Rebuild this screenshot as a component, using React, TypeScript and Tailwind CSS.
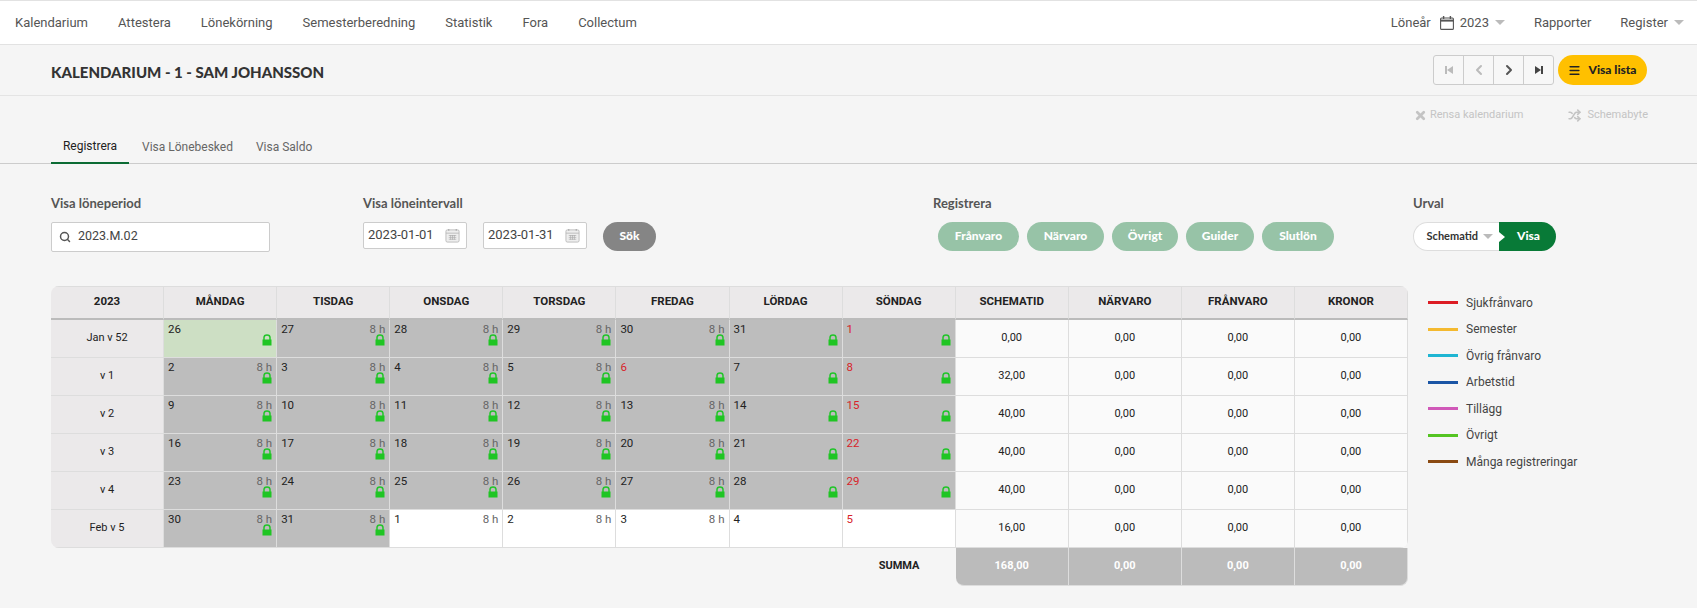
import { ChevronLeft, ChevronRight, Menu, Search, Shuffle, X } from "lucide-react"

const navLinks = ["Kalendarium", "Attestera", "Lönekörning", "Semesterberedning", "Statistik", "Fora", "Collectum"]
const pills = [
  { label: "Frånvaro", width: "w-[81px]" },
  { label: "Närvaro", width: "w-[77px]" },
  { label: "Övrigt", width: "w-[66px]" },
  { label: "Guider", width: "w-[68px]" },
  { label: "Slutlön", width: "w-[72px]" },
]
const headers = ["2023", "Måndag", "Tisdag", "Onsdag", "Torsdag", "Fredag", "Lördag", "Söndag", "Schematid", "Närvaro", "Frånvaro", "Kronor"]

const legend = [
  { label: "Sjukfrånvaro", color: "bg-[#dc1c24]" },
  { label: "Semester", color: "bg-[#f4b92f]" },
  { label: "Övrig frånvaro", color: "bg-[#1fb5d2]" },
  { label: "Arbetstid", color: "bg-[#1a55a5]" },
  { label: "Tillägg", color: "bg-[#d058b8]" },
  { label: "Övrigt", color: "bg-[#54c422]" },
  { label: "Många registreringar", color: "bg-[#8a4a12]" },
]

type Day = { n: number; hours?: boolean; locked?: boolean; green?: boolean }

const d = (n: number, hours = true, locked = true, green = false): Day => ({ n, hours, locked, green })

const rows: { week: string; days: Day[]; sched: string }[] = [
  { week: "Jan v 52", sched: "0,00", days: [d(26, false, true, true), d(27), d(28), d(29), d(30), d(31, false), d(1, false)] },
  { week: "v 1", sched: "32,00", days: [d(2), d(3), d(4), d(5), d(6, false), d(7, false), d(8, false)] },
  { week: "v 2", sched: "40,00", days: [d(9), d(10), d(11), d(12), d(13), d(14, false), d(15, false)] },
  { week: "v 3", sched: "40,00", days: [d(16), d(17), d(18), d(19), d(20), d(21, false), d(22, false)] },
  { week: "v 4", sched: "40,00", days: [d(23), d(24), d(25), d(26), d(27), d(28, false), d(29, false)] },
  { week: "Feb v 5", sched: "16,00", days: [d(30), d(31), d(1, true, false), d(2, true, false), d(3, true, false), d(4, false, false), d(5, false, false)] },
]

function Lock() {
  return (
    <svg viewBox="0 0 10 12" className="absolute right-[4px] top-[14px] w-[10px] h-[12px]">
      <path d="M2 6V3.6C2 1.9 3.3 1 5 1s3 .9 3 2.6V6" fill="none" stroke="#22c52a" strokeWidth="1.5" />
      <rect x="0.5" y="5.5" width="9" height="6" fill="#1fc523" />
    </svg>
  )
}

function DateIcon() {
  return (
    <svg viewBox="0 0 16 16" className="w-[15px] h-[15px]">
      <rect x="1" y="2" width="14" height="13" rx="1.5" fill="#eee" stroke="#bbb" />
      <path d="M4 1v2M12 1v2" stroke="#aaa" strokeWidth="1.2" />
      <path d="M1 5.5h14" stroke="#bbb" />
      <path d="M4 8h8M4 10h8M4 12h8M6 7.5v5M8 7.5v5M10 7.5v5" stroke="#aaa" strokeWidth="0.7" />
    </svg>
  )
}

function YearIcon() {
  return (
    <svg viewBox="0 0 14 14" className="w-[14px] h-[14px] ml-[9px] mr-[6px]" fill="none" stroke="#555" strokeWidth="1.1">
      <rect x="0.6" y="2" width="12.8" height="11.4" rx="1" />
      <path d="M0.6 4.6h12.8" strokeWidth="2" />
      <path d="M3.6 0v3M10.4 0v3" strokeWidth="1.4" />
    </svg>
  )
}

function Caret() {
  return <span className="w-0 h-0 border-x-[5px] border-x-transparent border-t-[5px] border-t-[#bbb]" />
}

function StepIcon({ flip, color }: { flip?: boolean; color: string }) {
  return (
    <svg viewBox="0 0 10 10" className={`w-[8px] h-[10px] ${flip ? "-scale-x-100" : ""}`} fill={color}>
      <rect x="0" y="0" width="2.5" height="10" />
      <path d="M10 0v10L2.5 5z" />
    </svg>
  )
}

function Cell({ day, sunday }: { day: Day; sunday: boolean }) {
  const bg = day.green ? "bg-[#cddfc4]" : day.locked ? "bg-[#bdbdbd]" : "bg-white"
  return (
    <div className={`relative h-[38px] ${bg} border-r border-b border-[#ddd] text-[11.5px] leading-none`}>
      <span className={`absolute left-[4px] top-[4px] ${sunday || (day.n === 6 && day.locked) ? "text-[#d8232a]" : "text-[#222]"}`}>{day.n}</span>
      {day.hours && <span className="absolute right-[4px] top-[4px] text-[#666]">8 h</span>}
      {day.locked && <Lock />}
    </div>
  )
}

function ValueCell({ value }: { value: string }) {
  return (
    <div className="h-[38px] bg-[#fafafa] border-r border-b border-[#ddd] flex items-center justify-center text-[11px] text-[#222]">
      {value}
    </div>
  )
}

export default function App() {
  return (
    <div className="min-h-screen bg-[#f5f5f5] font-['Roboto',sans-serif] text-[#333] overflow-hidden">
      <nav className="h-[45px] bg-white border-t border-b border-[#e2e2e2] flex items-center justify-between text-[13px] text-[#555]">
        <div className="flex">
          {navLinks.map((link) => (
            <a key={link} className="px-[15px]">{link}</a>
          ))}
        </div>
        <div className="flex items-center pr-[13px]">
          <span>Löneår</span>
          <YearIcon />
          <span>2023</span>
          <span className="ml-[6px] flex"><Caret /></span>
          <span className="ml-[29px]">Rapporter</span>
          <span className="ml-[29px]">Register</span>
          <span className="ml-[6px] flex"><Caret /></span>
        </div>
      </nav>

      <header className="h-[51px] border-b border-[#e4e4e4] flex items-center justify-between pl-[51px] pr-[50px]">
        <h1 className="pt-[4px] font-['Lato',sans-serif] font-black text-[15px] text-[#333]">KALENDARIUM - 1 - SAM JOHANSSON</h1>
        <div className="flex items-center gap-[4px]">
          <div className="flex h-[30px] bg-[#f7f7f7] border border-[#ccc] rounded-[3px] divide-x divide-[#ccc]">
            <span className="w-[30px] flex items-center justify-center"><StepIcon color="#bbb" /></span>
            <span className="w-[30px] flex items-center justify-center"><ChevronLeft size={16} strokeWidth={3} className="text-[#bbb]" /></span>
            <span className="w-[30px] flex items-center justify-center"><ChevronRight size={16} strokeWidth={3} className="text-[#555]" /></span>
            <span className="w-[29px] flex items-center justify-center"><StepIcon flip color="#444" /></span>
          </div>
          <button className="w-[89px] h-[30px] rounded-full bg-[#ffc000] flex items-center justify-center gap-[7px] font-['Lato',sans-serif] font-black text-[12px] text-[#222]">
            <Menu size={13} strokeWidth={3} />
            Visa lista
          </button>
        </div>
      </header>

      <div className="flex justify-end items-center gap-[45px] pt-[11px] pr-[49px] text-[11px] text-[#c4c4c4]">
        <span className="flex items-center gap-[3px]"><X size={13} strokeWidth={5} /> Rensa kalendarium</span>
        <span className="flex items-center gap-[6px]"><Shuffle size={13} strokeWidth={3} /> Schemabyte</span>
      </div>

      <div className="mt-[7px] h-[33px] border-b border-[#ccc] flex pl-[51px] text-[12px] text-[#666]">
        <span className="w-[78px] h-[33px] border-b-2 border-[#0b6b33] text-[#222] flex items-center justify-center">Registrera</span>
        <span className="ml-[13px] flex items-center">Visa Lönebesked</span>
        <span className="ml-[23px] flex items-center">Visa Saldo</span>
      </div>

      <section className="flex pl-[51px] pt-[30px]">
        <div className="w-[312px]">
          <label className="block font-['Lato',sans-serif] font-bold text-[13px] text-[#555] leading-[18px]">Visa löneperiod</label>
          <div className="mt-[10px] w-[219px] h-[30px] bg-white border border-[#ccc] rounded-[2px] flex items-center px-[7px] gap-[7px] text-[12.5px] text-[#444]">
            <Search size={12} strokeWidth={3} className="text-[#555]" />
            2023.M.02
          </div>
        </div>
        <div className="w-[570px]">
          <label className="block font-['Lato',sans-serif] font-bold text-[13px] text-[#555] leading-[18px]">Visa löneintervall</label>
          <div className="mt-[10px] flex items-start">
            {["2023-01-01", "2023-01-31"].map((date) => (
              <div key={date} className="w-[104px] h-[27px] mr-[16px] bg-white border border-[#ccc] rounded-[2px] flex items-center justify-between pl-[4px] pr-[6px] text-[13px] text-[#444]">
                {date}
                <DateIcon />
              </div>
            ))}
            <button className="w-[53px] h-[29px] rounded-full bg-[#858585] text-white font-['Lato',sans-serif] font-black text-[12px]">Sök</button>
          </div>
        </div>
        <div className="w-[480px]">
          <label className="block font-['Lato',sans-serif] font-bold text-[13px] text-[#555] leading-[18px]">Registrera</label>
          <div className="mt-[10px] ml-[5px] flex gap-[8px]">
            {pills.map((pill) => (
              <button key={pill.label} className={`${pill.width} h-[29px] rounded-full bg-[#97c3a7] text-white font-['Lato',sans-serif] font-black text-[12px]`}>{pill.label}</button>
            ))}
          </div>
        </div>
        <div>
          <label className="block font-['Lato',sans-serif] font-bold text-[13px] text-[#555] leading-[18px]">Urval</label>
          <div className="mt-[10px] flex h-[29px] w-[143px] font-['Lato',sans-serif] font-bold text-[11px]">
            <div className="w-[86px] bg-white border border-[#ddd] border-r-0 rounded-l-full flex items-center justify-end gap-[5px] pr-[6px] text-[#333]">
              Schematid <Caret />
            </div>
            <div className="relative flex-1 bg-[#087a37] rounded-r-full flex items-center pl-[18px] text-white font-black text-[12px]">
              <span className="absolute left-0 top-[10px] w-0 h-0 border-y-[5px] border-y-transparent border-l-[6px] border-l-white" />
              Visa
            </div>
          </div>
        </div>
      </section>

      <div className="flex pl-[51px] pt-[34px]">
        <div className="w-[1357px]">
          <div className="rounded-lg overflow-hidden">
            <div className="grid grid-cols-12">
              {headers.map((h) => (
                <div
                  key={h}
                  className="h-[34px] bg-[#ebe9ea] border-t border-r border-[#ddd] border-b-2 border-b-[#bbb] flex items-center justify-center font-bold text-[11.5px] uppercase text-[#222]"
                >
                  {h}
                </div>
              ))}
              {rows.map((row) => (
                <div key={row.week} className="contents">
                  <div className="h-[38px] bg-[#ebe9ea] border-r border-b border-[#ddd] flex items-center justify-center text-[11px] text-[#222]">{row.week}</div>
                  {row.days.map((day, i) => (
                    <Cell key={i} day={day} sunday={i === 6} />
                  ))}
                  <ValueCell value={row.sched} />
                  <ValueCell value="0,00" />
                  <ValueCell value="0,00" />
                  <ValueCell value="0,00" />
                </div>
              ))}
            </div>
          </div>
          <div className="grid grid-cols-12">
            <div className="col-start-8 h-[38px] flex items-center justify-center font-bold text-[11px] text-[#222]">SUMMA</div>
            {["168,00", "0,00", "0,00", "0,00"].map((v, i) => (
              <div
                key={i}
                className={`h-[38px] bg-[#bbb] border-r border-b border-[#ddd] flex items-center justify-center font-bold text-[11px] text-white ${i === 0 ? "rounded-bl-lg" : ""} ${i === 3 ? "rounded-br-lg" : ""}`}
              >
                {v}
              </div>
            ))}
          </div>
        </div>
        <ul className="ml-[20px] pt-[4px]">
          {legend.map((item) => (
            <li key={item.label} className="h-[26.5px] flex items-center gap-[8px] text-[12px] text-[#444]">
              <span className={`w-[30px] h-[3px] ${item.color}`} />
              {item.label}
            </li>
          ))}
        </ul>
      </div>
    </div>
  )
}
